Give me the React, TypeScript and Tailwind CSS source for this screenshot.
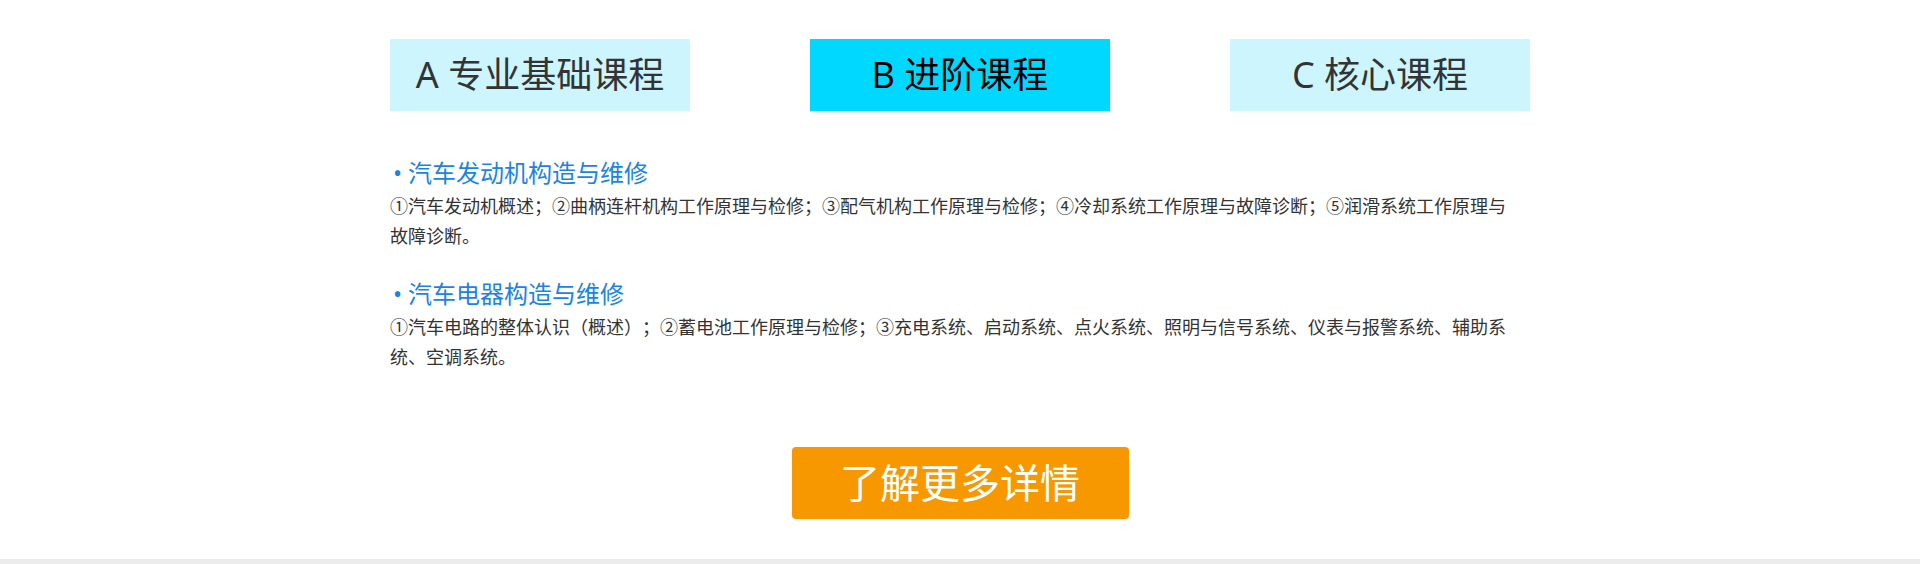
import React, { useState } from "react";

interface Course {
  title: string;
  desc: string;
}

const TABS = ["A 专业基础课程", "B 进阶课程", "C 核心课程"];

const COURSES: Course[] = [
  {
    title: "汽车发动机构造与维修",
    desc: "①汽车发动机概述；②曲柄连杆机构工作原理与检修；③配气机构工作原理与检修；④冷却系统工作原理与故障诊断；⑤润滑系统工作原理与故障诊断。",
  },
  {
    title: "汽车电器构造与维修",
    desc: "①汽车电路的整体认识（概述）；②蓄电池工作原理与检修；③充电系统、启动系统、点火系统、照明与信号系统、仪表与报警系统、辅助系统、空调系统。",
  },
];

const App = () => {
  const [active, setActive] = useState(1);

  return (
    <div
      className="w-full h-[564px] bg-white flex flex-col [text-spacing-trim:space-all]"
      style={{ fontFamily: '"Noto Sans", "Noto Sans CJK SC", sans-serif' }}
    >
      <div className="w-[1140px] mx-auto pt-[39px] flex-1 flex flex-col">
        {/* tabs */}
        <div className="flex justify-between">
          {TABS.map((t, i) => (
            <button
              key={t}
              onClick={() => setActive(i)}
              className={`w-[300px] h-[72px] flex items-center justify-center text-[36px] leading-none ${
                i === active
                  ? "bg-[#00d8ff] text-black"
                  : "bg-[#ccf5fd] text-[#333333]"
              }`}
            >
              {t}
            </button>
          ))}
        </div>

        {/* course list */}
        <div className="mt-[44px] w-[1130px] flex flex-col gap-[25px]">
          {COURSES.map((c) => (
            <div key={c.title}>
              <h3 className="text-[24px] leading-[36px] text-[#1a84e3] pl-[3px]">
                <span className="mr-[6px]">•</span>
                {c.title}
              </h3>
              <p className="text-[18px] leading-[30px] text-[#333333]">
                {c.desc}
              </p>
            </div>
          ))}
        </div>

        <button className="mt-[75px] mx-auto w-[337px] h-[72px] rounded-[4px] bg-[#f89800] text-white text-[40px] leading-none flex items-center justify-center">
          了解更多详情
        </button>
      </div>
      <div className="h-[5px] bg-[#ececec]" />
    </div>
  );
};

export default App;
